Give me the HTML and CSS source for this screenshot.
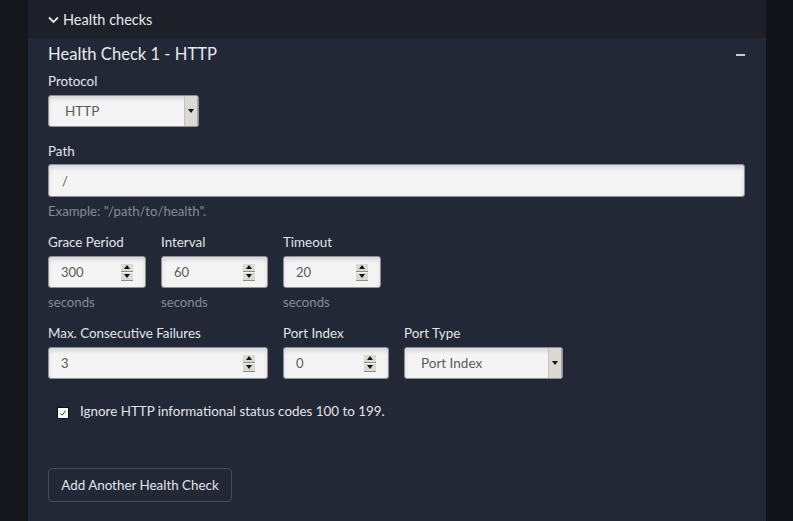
FILE: index.html
```html
<!DOCTYPE html>
<html>
<head>
<meta charset="utf-8">
<link rel="stylesheet" href="styles.css">
</head>
<body>
<div class="page">
  <div class="gutter"></div>
  <div class="main">
    <div class="section-head">
      <svg class="chev" width="11" height="8" viewBox="0 0 11 8"><path d="M1 1.5 L5.5 6 L10 1.5" fill="none" stroke="#e4e6ea" stroke-width="1.8"/></svg>
      <span>Health checks</span>
    </div>
    <div class="panel">
      <div class="title-row">
        <h2 class="title">Health Check 1 - HTTP</h2>
        <span class="minus"></span>
      </div>

      <div class="label">Protocol</div>
      <div class="box select w-protocol">
        <span class="val sel-val">HTTP</span>
        <span class="drop"><span class="tri-down"></span></span>
      </div>

      <div class="label gap-top">Path</div>
      <div class="box text w-full"><span class="val path-val">/</span></div>
      <div class="hint">Example: "/path/to/health".</div>

      <div class="row gap-row">
        <div class="col">
          <div class="label">Grace Period</div>
          <div class="box num w-grace"><span class="val">300</span><span class="spin"><span class="sb"><span class="tri-up"></span></span><span class="sb"><span class="tri-down"></span></span></span></div>
          <div class="hint">seconds</div>
        </div>
        <div class="col">
          <div class="label">Interval</div>
          <div class="box num w-interval"><span class="val">60</span><span class="spin"><span class="sb"><span class="tri-up"></span></span><span class="sb"><span class="tri-down"></span></span></span></div>
          <div class="hint">seconds</div>
        </div>
        <div class="col">
          <div class="label">Timeout</div>
          <div class="box num w-timeout"><span class="val">20</span><span class="spin"><span class="sb"><span class="tri-up"></span></span><span class="sb"><span class="tri-down"></span></span></span></div>
          <div class="hint">seconds</div>
        </div>
      </div>

      <div class="row gap-row">
        <div class="col">
          <div class="label">Max. Consecutive Failures</div>
          <div class="box num w-max"><span class="val">3</span><span class="spin"><span class="sb"><span class="tri-up"></span></span><span class="sb"><span class="tri-down"></span></span></span></div>
        </div>
        <div class="col">
          <div class="label">Port Index</div>
          <div class="box num w-port"><span class="val">0</span><span class="spin"><span class="sb"><span class="tri-up"></span></span><span class="sb"><span class="tri-down"></span></span></span></div>
        </div>
        <div class="col">
          <div class="label">Port Type</div>
          <div class="box select w-ptype">
            <span class="val sel-val">Port Index</span>
            <span class="drop"><span class="tri-down"></span></span>
          </div>
        </div>
      </div>

      <label class="check-row">
        <span class="checkbox">
          <svg width="10" height="10" viewBox="0 0 10 10"><path d="M2.5 5.5 L4.2 7.2 L7.5 2.8" fill="none" stroke="#333" stroke-width="1"/></svg>
        </span>
        <span class="check-label">Ignore HTTP informational status codes 100 to 199.</span>
      </label>

      <button class="btn">Add Another Health Check</button>
    </div>
  </div>
  <div class="gutter right"></div>
</div>
</body>
</html>
```
FILE: styles.css
```css
* { box-sizing: border-box; }
html, body {
  margin: 0;
  padding: 0;
  background: #15171d;
  font-family: "Source Sans Pro", Lato, "Liberation Sans", sans-serif;
  color: #e2e4e8;
}
.page {
  display: flex;
  height: 521px;
  overflow: hidden;
}
.gutter { width: 28px; flex: none; background: #15171d; }
.gutter.right { width: 27px; background: #12141a; }
.main {
  width: 738px;
  flex: none;
  display: flex;
  flex-direction: column;
}
.section-head {
  height: 38px;
  background: #1e2029;
  display: flex;
  align-items: center;
  padding-left: 20px;
  font-size: 14.5px;
  color: #e6e8ec;
}
.chev { margin-right: 4px; margin-top: 1px; }
.panel {
  flex: 1;
  background: #232836;
  padding: 4px 20px 0 20px;
}
.title-row {
  display: flex;
  align-items: center;
  justify-content: space-between;
  height: 24px;
  margin-bottom: 5px;
}
.title {
  margin: 0;
  font-size: 16.6px;
  font-weight: normal;
  color: #e8eaee;
  line-height: 24px;
}
.minus {
  width: 9px;
  height: 2px;
  background: #c9ccd6;
  margin-right: 1px;
  margin-top: 2px;
}
.label {
  font-size: 13.4px;
  line-height: 20px;
  color: #e2e4e8;
  margin-bottom: 4px;
}
.gap-top { margin-top: 14px; margin-bottom: 3px; }
.hint {
  font-size: 13.2px;
  line-height: 20px;
  color: #858b97;
  margin-top: 4px;
}
.box {
  height: 32px;
  border: 1px solid #8d9098;
  border-radius: 3px;
  background: #f4f4f4;
  box-shadow: inset 0 3px 4px rgba(0,0,0,0.12);
  display: flex;
  align-items: center;
  color: #5a5a5a;
  font-size: 13px;
  position: relative;
  overflow: hidden;
}
.box.text { height: 33px; }
.val { flex: 1; padding-left: 12px; }
.sel-val { padding-left: 16px; font-size: 13.5px; }
.path-val { padding-left: 13px; }
.w-protocol { width: 151px; }
.w-full { width: 697px; }
.w-grace { width: 98px; }
.w-interval { width: 107px; }
.w-timeout { width: 98px; }
.w-max { width: 220px; }
.w-port { width: 106px; }
.w-ptype { width: 159px; }
.drop {
  width: 14px;
  align-self: stretch;
  background: #dbd9d3;
  border-left: 1px solid #c4c2bc;
  border-right: 1px solid #a9a7a1;
  display: flex;
  align-items: center;
  justify-content: center;
}
.tri-down {
  width: 0; height: 0;
  border-left: 3px solid transparent;
  border-right: 3px solid transparent;
  border-top: 4px solid #111;
}
.tri-up {
  width: 0; height: 0;
  border-left: 3px solid transparent;
  border-right: 3px solid transparent;
  border-bottom: 4px solid #111;
}
.spin {
  display: flex;
  flex-direction: column;
  gap: 1px;
  margin-right: 12px;
}
.sb {
  width: 12px;
  height: 8px;
  background: #dbd9d3;
  border-bottom: 1px solid #8e8c86;
  display: flex;
  align-items: center;
  justify-content: center;
}
.row {
  display: flex;
  gap: 15px;
}
.gap-row { margin-top: 11px; }
.check-row {
  display: flex;
  align-items: center;
  margin-top: 22px;
  padding-left: 9px;
  height: 20px;
}
.checkbox {
  width: 12px;
  height: 12px;
  border: 1px solid #111;
  background: #fff;
  display: flex;
  align-items: center;
  justify-content: center;
  margin-top: 3px;
}
.check-label {
  margin-left: 11px;
  font-size: 13.4px;
  color: #e2e4e8;
}
.btn {
  display: block;
  margin-top: 47px;
  width: 184px;
  height: 34px;
  background: transparent;
  border: 1px solid #444b5c;
  border-radius: 4px;
  color: #e2e4e8;
  font-family: inherit;
  font-size: 13.4px;
  padding: 0;
}
```
